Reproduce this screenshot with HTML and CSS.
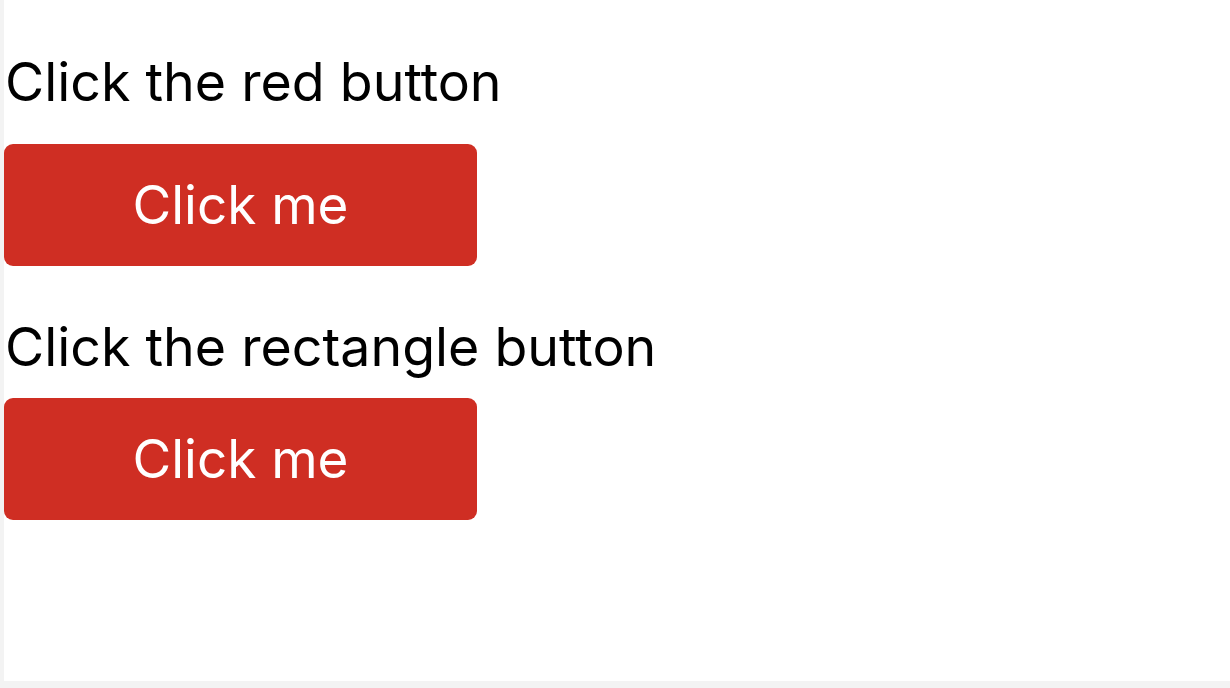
FILE: index.html
```html
<!DOCTYPE html>
<html>
<head>
<meta charset="utf-8">
<link rel="stylesheet" href="styles.css">
</head>
<body>
<main class="page">
  <p class="label">Click the red button</p>
  <button class="btn btn-first">Click me</button>
  <p class="label label-second">Click the rectangle button</p>
  <button class="btn btn-second">Click me</button>
</main>
</body>
</html>
```
FILE: styles.css
```css
html, body {
  margin: 0;
  padding: 0;
  background: #f3f3f3;
  height: 100%;
}
.page {
  box-sizing: border-box;
  margin-left: 4px;
  height: 681px;
  background: #ffffff;
  padding-top: 50px;
  display: flex;
  flex-direction: column;
  align-items: flex-start;
  font-family: Inter, "Noto Sans", sans-serif;
}
.label {
  margin: 0;
  font-size: 53.7px;
  line-height: 64px;
  color: #000;
  padding-left: 1px;
}
.label-second {
  margin-top: 49px;
}
.btn {
  width: 473px;
  height: 122px;
  border: none;
  border-radius: 9px;
  background: #cf2e23;
  color: #fff;
  font-family: Inter, "Noto Sans", sans-serif;
  font-size: 53px;
  padding: 0;
}
.btn-first { margin-top: 30px; }
.btn-second { margin-top: 19px; }
```
